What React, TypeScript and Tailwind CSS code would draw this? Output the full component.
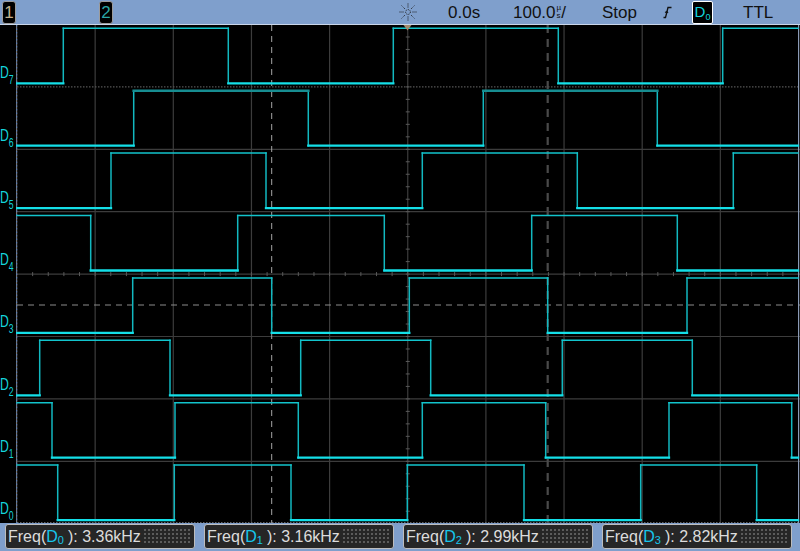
import * as React from "react";

type Channel = { n: number; high: boolean; t: number[] };

// transition x positions (page px) for each digital channel, top row first
const channels: Channel[] = [
  { n: 7, high: false, t: [63.3, 228.3, 393.3, 558.3, 722.7] },
  { n: 6, high: false, t: [133.7, 308.3, 483.3, 657.3] },
  { n: 5, high: false, t: [111, 266, 422.3, 577.3, 733.3] },
  { n: 4, high: true, t: [90.7, 237.7, 384.3, 531.7, 677.3] },
  { n: 3, high: false, t: [132.7, 271.7, 409.3, 547.7, 687] },
  { n: 2, high: false, t: [39.7, 170, 300.7, 430.7, 562.3, 692.3] },
  { n: 1, high: true, t: [52, 175, 298.3, 422.3, 545.7, 669, 791.7] },
  { n: 0, high: true, t: [57.7, 174.3, 291, 407.3, 524, 640.7, 756.7] },
];

const freqs = [
  { ch: 0, value: "3.36kHz" },
  { ch: 1, value: "3.16kHz" },
  { ch: 2, value: "2.99kHz" },
  { ch: 3, value: "2.82kHz" },
];

const X0 = 17;
const X1 = 798;
const DIV_X = 78.15;
const Y0 = 24.5;
const DIV_Y = 62.4;

function tracePaths(ch: Channel, row: number) {
  const top = Y0 + DIV_Y * row;
  const hi = top + 3.8;
  const lo = top + 58.8;
  const xs = [X0, ...ch.t, X1];
  let level = ch.high;
  const highs: string[] = [];
  const lows: string[] = [];
  const edges: string[] = [];
  for (let i = 0; i < xs.length - 1; i++) {
    const y = level ? hi : lo;
    (level ? highs : lows).push(`M${xs[i]} ${y}H${xs[i + 1]}`);
    if (i < xs.length - 2) edges.push(`M${xs[i + 1]} ${hi}V${lo}`);
    level = !level;
  }
  return { highs: highs.join(""), lows: lows.join(""), edges: edges.join("") };
}

function Plot() {
  const vLines = Array.from({ length: 9 }, (_, i) => X0 + DIV_X * (i + 1));
  const hLines = Array.from({ length: 7 }, (_, i) => Y0 + DIV_Y * (i + 1));
  const cx = X0 + DIV_X * 5;
  const cy = Y0 + DIV_Y * 4;
  const vTicks = Array.from({ length: 39 }, (_, i) => Y0 + (DIV_Y / 5) * (i + 1));
  const hTicks = Array.from({ length: 49 }, (_, i) => X0 + (DIV_X / 5) * (i + 1));

  return (
    <svg width={784} height={498} viewBox="16 25 784 498" className="block">
      <rect x={16} y={25} width={784} height={498} fill="#000" />

      {/* grid */}
      {vLines.map((x, i) => (
        <line key={`v${i}`} x1={x} y1={25} x2={x} y2={523} stroke="#3c3c3c" strokeWidth={1.2} />
      ))}
      {hLines.map((y, i) => (
        <line
          key={`h${i}`}
          x1={X0}
          y1={y}
          x2={800}
          y2={y}
          stroke={i === 0 ? "#555" : "#3c3c3c"}
          strokeWidth={1.2}
          strokeDasharray={i === 0 ? "1.5 1.5" : undefined}
        />
      ))}
      <line x1={X0} y1={522.5} x2={800} y2={522.5} stroke="#666" strokeDasharray="1.5 1.5" />

      {/* center axes with ticks */}
      {vTicks.map((y, i) => (
        <line key={`vt${i}`} x1={cx - 2} y1={y} x2={cx + 2} y2={y} stroke="#5a5a5a" />
      ))}
      {hTicks.map((x, i) => (
        <line key={`ht${i}`} x1={x} y1={cy - 2} x2={x} y2={cy + 2} stroke="#5a5a5a" />
      ))}

      {/* cursors and level marker */}
      <line x1={X0} y1={305} x2={800} y2={305} stroke="#8c8c8c" strokeDasharray="6 5" />
      <line x1={271.7} y1={25} x2={271.7} y2={523} stroke="#a6a6a6" strokeDasharray="6 5" />
      <line x1={547.7} y1={25} x2={547.7} y2={523} stroke="#4a4a4a" strokeWidth={2.2} strokeDasharray="8 6" />

      {/* borders */}
      <line x1={16.6} y1={25} x2={16.6} y2={523} stroke="#777" strokeWidth={1.2} />
      <line x1={16.6} y1={25} x2={16.6} y2={523} stroke="#5b7db5" strokeWidth={1.2} strokeDasharray="1.5 2" />
      <line x1={798.6} y1={25} x2={798.6} y2={523} stroke="#8a9ab5" strokeWidth={1.2} />

      {/* traces */}
      {channels.map((ch, r) => {
        const p = tracePaths(ch, r);
        const darkHigh = ch.n === 6;
        return (
          <g key={ch.n} fill="none" strokeLinecap="square">
            <path d={p.edges} stroke="#12b8c0" strokeWidth={1.5} />
            <path
              d={p.highs}
              stroke={darkHigh ? "#178d91" : "#12c4cc"}
              strokeWidth={darkHigh ? 2.6 : 1.5}
            />
            <path d={p.lows} stroke="#14dfe8" strokeWidth={2.3} />
          </g>
        );
      })}

      {/* trigger position marker */}
      <polygon points="403.5,25 411.5,25 407.5,30.5" fill="#a48c6e" />
    </svg>
  );
}

function Sunburst() {
  const rays = Array.from({ length: 8 }, (_, i) => (i * Math.PI) / 4);
  return (
    <svg width={20} height={20} viewBox="0 0 20 20">
      <circle cx={10} cy={10} r={2.4} fill="none" stroke="#1a1a1a" strokeWidth={1} strokeDasharray="1 1" />
      {rays.map((a, i) => (
        <line
          key={i}
          x1={10 + Math.cos(a) * 4.5}
          y1={10 + Math.sin(a) * 4.5}
          x2={10 + Math.cos(a) * 9}
          y2={10 + Math.sin(a) * 9}
          stroke="#1a1a1a"
          strokeWidth={1}
          strokeDasharray="1 1"
        />
      ))}
    </svg>
  );
}

function EdgeIcon() {
  return (
    <svg width={9} height={13} viewBox="0 0 9 13">
      <path d="M0.5 11.5H2.5L5 1.5H8.5" fill="none" stroke="#111" strokeWidth={1.3} />
      <path d="M2 6.5L4 5.5L5 7" fill="none" stroke="#111" strokeWidth={1.1} />
    </svg>
  );
}

function ChipBox({ children, color }: { children: React.ReactNode; color: string }) {
  return (
    <div
      className={`flex h-[23px] w-[14px] items-center justify-center rounded-[3px] border border-[#9c9c9c] bg-black text-[17px] leading-none ${color}`}
    >
      {children}
    </div>
  );
}

export default function App() {
  return (
    <div className="flex h-[551px] w-[800px] flex-col overflow-hidden bg-black font-['Liberation_Sans',Arial,sans-serif]">
      {/* Top status bar */}
      <div className="flex h-[25px] shrink-0 items-center border-b border-[#c9d6ea] bg-[#7f9fcc] pl-[2px] text-[17px] leading-none text-[#111]">
        <ChipBox color="text-[#c2b28e]">1</ChipBox>
        <div className="ml-[83px]">
          <ChipBox color="text-[#2aa6a6]">2</ChipBox>
        </div>
        <div className="ml-[285px] flex w-[20px] items-center">
          <Sunburst />
        </div>
        <div className="ml-[30px] w-[65px]">0.0s</div>
        <div className="flex w-[89px] items-center">
          <span>100.0</span>
          <span className="ml-[1px] flex flex-col text-[8px] leading-[8px]">
            <span>µ</span>
            <span>s</span>
          </span>
          <span>/</span>
        </div>
        <div className="w-[60px]">Stop</div>
        <div className="flex w-[30px] items-center pl-[1px]">
          <EdgeIcon />
        </div>
        <div className="flex h-[23px] w-[21px] items-end justify-center rounded-[2px] border border-white bg-black pb-[4px] text-[#14d4dc]">
          <span className="text-[15px] leading-none">D</span>
          <span className="relative top-[3px] text-[9px] leading-none">0</span>
        </div>
        <div className="ml-[30px]">TTL</div>
      </div>

      {/* Waveform area */}
      <div className="flex h-[498px] shrink-0">
        <div className="flex w-[16px] shrink-0 flex-col bg-black text-[#14d4dc]">
          {channels.map((ch) => (
            <div key={ch.n} className="flex flex-1 items-end pb-[6px]">
              <div className="flex origin-left scale-x-[0.72] items-end">
                <span className="text-[17px] leading-none">D</span>
                <span className="relative top-[5px] text-[12px] leading-none">{ch.n}</span>
              </div>
            </div>
          ))}
        </div>
        <Plot />
      </div>

      {/* Measurement bar */}
      <div className="flex h-[28px] shrink-0 items-start gap-[9px] bg-[#7f9fcc] pl-[5px] pt-[1px]">
        {freqs.map((f) => (
          <div
            key={f.ch}
            className="flex h-[25px] w-[190px] items-center rounded-[3px] border border-[#bdbdbd] bg-[#262626] pl-[2px] text-[16px] leading-none text-[#dcdcdc]"
          >
            <span>Freq(</span>
            <span className="text-[#16c6ec]">D</span>
            <span className="relative top-[4px] text-[11px] text-[#16c6ec]">{f.ch}</span>
            <span className="ml-[4px] whitespace-pre">): {f.value}</span>
            <div className="my-[3px] ml-[2px] mr-[3px] flex-1 self-stretch bg-[radial-gradient(circle,#5e5e5e_0.7px,transparent_0.9px)] bg-size-[4px_4px]" />
          </div>
        ))}
      </div>
    </div>
  );
}
